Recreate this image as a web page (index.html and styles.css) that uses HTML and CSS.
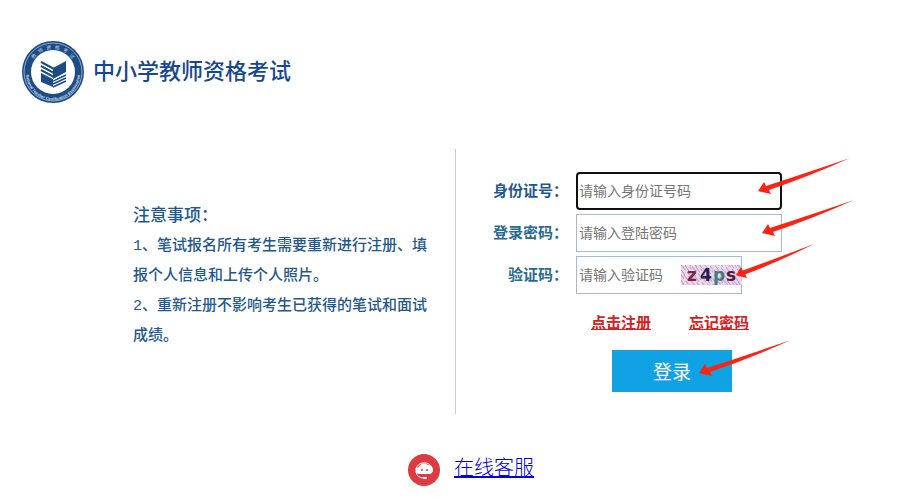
FILE: index.html
```
<!DOCTYPE html>
<html lang="zh-CN">
	<head>
		<meta charset="UTF-8">
		<title>中小学教师资格考试</title>
		<link rel="stylesheet" href="styles.css">
	</head>
	<body>
		<svg class="defs" width="0" height="0" aria-hidden="true">
			<symbol id="arrow" viewBox="0 0 92 38" preserveAspectRatio="none">
				<path d="M0 33 L6 24 L8 28 Q48 15 92 0 Q52 18 11 32 L13 36 Z" fill="#fb2414"/>
			</symbol>
		</svg>

		<div class="header">
			<svg class="logo" viewBox="0 0 62 62" aria-hidden="true">
				<circle cx="31" cy="31" r="31" fill="#1d4b86"/>
				<circle cx="31" cy="31" r="29" fill="none" stroke="#8fabcc" stroke-width="1"/>
				<circle cx="31" cy="31" r="22" fill="#fff"/>
				<path id="top" d="M8 31 A23 23 0 0 1 54 31" fill="none"/>
				<path id="bottom" d="M5 25 A27 27 0 1 0 57 25" fill="none"/>
				<text class="ring-cn"><textPath href="#top" startOffset="50%" text-anchor="middle">教 师 资 格 考 试</textPath></text>
				<text class="ring-en"><textPath href="#bottom" startOffset="50%" text-anchor="middle">National Teacher Certification Examination</textPath></text>
				<g fill="#1d4b86">
					<path d="M31 27 L44 20 V31 L31 38 Z"/>
					<path d="M19 32 L31 38 V46 L19 41 Z"/>
				</g>
				<g fill="none" stroke="#1d4b86" stroke-width="2">
					<path d="M19 21 L32 28 M19 25 L32 32 M19 29 L32 36"/>
					<path d="M44 34 L31 40 M44 37 L31 43 M44 40 L31 46" stroke-width="1.6"/>
				</g>
				<path d="M19 23 L30 29 M19 27 L30 33 M31 39 L44 32" fill="none" stroke="#fff" stroke-width="1"/>
			</svg>
			<h1>中小学教师资格考试</h1>
		</div>

		<div class="main">
			<div class="notice">
				<h2>注意事项：</h2>
				<p>1、笔试报名所有考生需要重新进行注册、填报个人信息和上传个人照片。</p>
				<p>2、重新注册不影响考生已获得的笔试和面试成绩。</p>
			</div>

			<form class="login">
				<div class="row">
					<label for="idcard">身份证号：</label>
					<div class="field">
						<input class="active" type="text" id="idcard" placeholder="请输入身份证号码">
						<svg class="arrow"><use href="#arrow"/></svg>
					</div>
				</div>
				<div class="row">
					<label class="teal" for="password">登录密码：</label>
					<div class="field">
						<input type="password" id="password" placeholder="请输入登陆密码">
						<svg class="arrow arrow-right"><use href="#arrow"/></svg>
					</div>
				</div>
				<div class="row">
					<label class="teal" for="code">验证码：</label>
					<div class="field short">
						<input type="text" id="code" placeholder="请输入验证码">
						<svg class="captcha" viewBox="0 0 61 20">
							<defs>
								<pattern id="noise" width="11" height="9" patternUnits="userSpaceOnUse" patternTransform="rotate(8)">
									<rect width="11" height="9" fill="#ecd8ee"/>
									<path d="M0 0 L5 4 M4 0 L9 5 M1 5 L5 9 M7 6 L10 9 M9 1 L11 3" stroke="#b487b4" stroke-width="1"/>
								</pattern>
							</defs>
							<rect width="61" height="20" fill="url(#noise)"/>
							<text x="6" y="16" fill="#7c2549">z</text>
							<text x="19" y="16" fill="#25204f">4</text>
							<text x="32" y="16" fill="#417c80">p</text>
							<text x="45" y="16" fill="#541c33">s</text>
						</svg>
						<svg class="arrow"><use href="#arrow"/></svg>
					</div>
				</div>
				<div class="links">
					<a href="#">点击注册</a>
					<a href="#">忘记密码</a>
				</div>
				<div class="submit">
					<button type="button">登录</button>
					<svg class="arrow"><use href="#arrow"/></svg>
				</div>
			</form>
		</div>

		<div class="service">
			<svg viewBox="0 0 32 32" aria-hidden="true">
				<circle cx="16" cy="16" r="16" fill="#dc3c41"/>
				<path d="M8 15 A8.5 8.5 0 0 1 24 14" fill="none" stroke="#fff" stroke-width="1"/>
				<path d="M12 20 A3.5 3.5 0 0 1 11 13 A5.5 5.5 0 0 1 20 11 A4.7 4.7 0 0 1 22 20 Z" fill="#fff"/>
				<path d="M8 14 V18 Q9 24 16 24 M24 14 V18" fill="none" stroke="#fff" stroke-width="1"/>
				<rect x="15" y="23" width="4" height="2" rx="1" fill="#fff"/>
				<circle cx="14" cy="16" r="1" fill="#dc3c41"/>
				<circle cx="19" cy="16" r="1" fill="#dc3c41"/>
			</svg>
			<a href="#">在线客服</a>
		</div>
	</body>
</html>
```
FILE: styles.css
```
* {
	margin: 0;
	padding: 0;
	box-sizing: border-box;
}

body {
	background: #fff;
	font-family: "Liberation Mono", "Noto Sans CJK SC", sans-serif;
	font-size: 15px;
	color: #1f588c;
}

.defs {
	position: absolute;
}

.header {
	display: flex;
	align-items: center;
	gap: 9px;
	padding: 41px 22px 0;
}

.logo {
	width: 62px;
	height: 62px;
}

.ring-cn {
	font-size: 5px;
	fill: #b9cbe0;
}

.ring-en {
	font-family: "Liberation Sans", sans-serif;
	font-size: 4px;
	font-weight: bold;
	fill: #d5e0ee;
}

h1 {
	padding-top: 3px;
	font-size: 22px;
	font-weight: 500;
	line-height: 30px;
	color: #17498a;
}

/*左右两栏*/
.main {
	display: grid;
	grid-template-columns: 1fr 1fr;
	margin: 46px 12px 0 0;
}

.notice {
	padding: 53px 28px 60px 133px;
	border-right: 1px solid #ccc;
	font-weight: 500;
	line-height: 30px;
}

.notice h2 {
	font-size: 17px;
	font-weight: 500;
}

.login {
	padding: 23px 0 22px 36px;
}

.row {
	display: flex;
	align-items: center;
	gap: 7px;
	margin-bottom: 4px;
}

.row label {
	width: 77px;
	padding: 0 1px 2px 0;
	text-align: right;
	font-weight: bold;
	white-space: nowrap;
}

.row .teal {
	color: #286a90;
}

.field {
	position: relative;
	width: 206px;
}

.short {
	width: 166px;
}

.field input {
	display: block;
	width: 100%;
	height: 38px;
	padding: 0 2px 2px;
	border: 1px solid #a9b9c9;
	background: #fff;
	font-family: "Noto Sans CJK SC", sans-serif;
	font-size: 14px;
	outline: none;
}

.field .active {
	padding: 0 1px 2px;
	border: 2px solid #101010;
	border-radius: 4px;
}

.field input::placeholder {
	color: #757575;
}

.captcha {
	position: absolute;
	top: 9px;
	right: 0;
	width: 61px;
	height: 20px;
	font-family: "DejaVu Sans", sans-serif;
	font-size: 17px;
	font-weight: bold;
}

/*红色箭头浮在输入框和按钮上方*/
.arrow {
	position: absolute;
	left: 100%;
	bottom: 14px;
	width: 92px;
	height: 38px;
	margin-left: -24px;
	pointer-events: none;
}

.arrow-right {
	margin-left: -20px;
}

.short .arrow {
	width: 78px;
	height: 36px;
	margin-left: -6px;
}

.links {
	display: flex;
	gap: 38px;
	padding: 12px 0 0 99px;
	line-height: 30px;
}

.links a {
	font-weight: bold;
	color: #d8201f;
}

.submit {
	position: relative;
	width: 120px;
	margin: 10px 0 0 120px;
}

.submit button {
	display: block;
	width: 100%;
	height: 42px;
	padding-bottom: 2px;
	border: 0;
	background: #10a2e3;
	color: #fff;
	font-family: "Noto Sans CJK SC", sans-serif;
	font-size: 19px;
}

.submit .arrow {
	margin-left: -33px;
}

.service {
	display: flex;
	justify-content: center;
	align-items: center;
	gap: 14px;
	padding: 40px 0 0 18px;
}

.service svg {
	width: 32px;
	height: 32px;
}

.service a {
	font-size: 20px;
	font-weight: 300;
	line-height: 30px;
	color: #0000e0;
}
```
